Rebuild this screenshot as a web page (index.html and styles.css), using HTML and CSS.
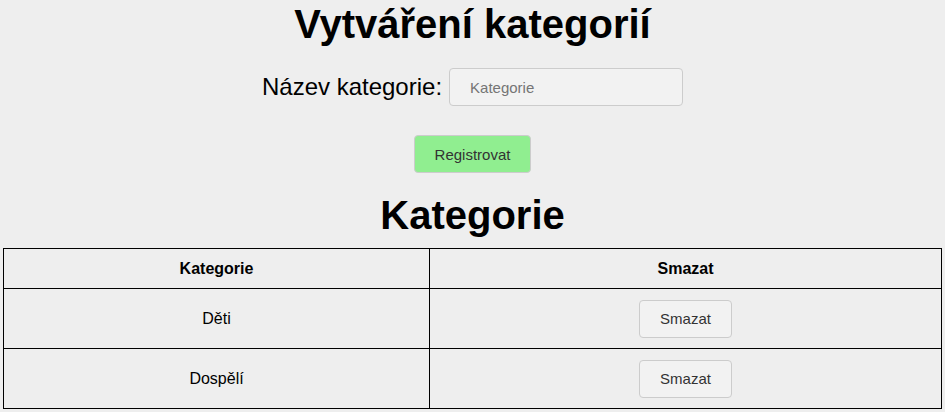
FILE: index.html
```html
<!DOCTYPE html>
<html lang="cs">
<head>
<meta charset="utf-8">
<title>Vytváření kategorií</title>
<link rel="stylesheet" href="styles.css">
</head>
<body>
<div class="page">
  <h1 class="title">Vytváření kategorií</h1>
  <form class="form">
    <div class="form-row">
      <label class="label" for="kat">Název kategorie:</label>
      <input class="input" id="kat" type="text" placeholder="Kategorie">
    </div>
    <button class="btn btn-green" type="button">Registrovat</button>
  </form>
  <h2 class="title title-sub">Kategorie</h2>
  <table class="table">
    <thead>
      <tr>
        <th class="col-name">Kategorie</th>
        <th>Smazat</th>
      </tr>
    </thead>
    <tbody>
      <tr>
        <td>Děti</td>
        <td><button class="btn" type="button">Smazat</button></td>
      </tr>
      <tr>
        <td>Dospělí</td>
        <td><button class="btn" type="button">Smazat</button></td>
      </tr>
    </tbody>
  </table>
</div>
</body>
</html>
```
FILE: styles.css
```css
html, body {
  margin: 0;
  padding: 0;
  background: #eeeeee;
  font-family: "Liberation Sans", Arial, sans-serif;
  color: #000;
}

.page {
  display: flex;
  flex-direction: column;
  align-items: center;
}

.title {
  margin: 2px 0 0;
  font-size: 40px;
  font-weight: bold;
  line-height: normal;
}

.title-sub {
  margin: 20px 0 0;
}

.form {
  display: flex;
  flex-direction: column;
  align-items: center;
  margin-top: 21px;
}

.form-row {
  display: flex;
  align-items: center;
  gap: 7px;
}

.label {
  font-size: 24px;
}

.input {
  box-sizing: border-box;
  width: 234px;
  height: 38px;
  padding: 0 20px;
  font-family: "Liberation Sans", Arial, sans-serif;
  font-size: 15px;
  background: #f2f2f2;
  border: 1px solid #cccccc;
  border-radius: 4px;
  color: #333;
  outline: none;
}

.input::placeholder {
  color: #757575;
}

.btn {
  box-sizing: border-box;
  height: 38px;
  padding: 0 20px;
  font-family: "Liberation Sans", Arial, sans-serif;
  font-size: 15px;
  color: #333333;
  background: #f2f2f2;
  border: 1px solid #cccccc;
  border-radius: 4px;
  cursor: pointer;
}

.btn-green {
  margin-top: 29px;
  background: #90ee90;
}

.table {
  width: calc(100% - 6px);
  margin: 10px 3px 0;
  border-collapse: collapse;
  font-size: 16px;
}

.table th,
.table td {
  border: 1px solid #000;
  text-align: center;
  padding: 0;
}

.table th {
  height: 39px;
  font-weight: bold;
}

.table td {
  height: 59px;
}

.col-name {
  width: 425px;
}
```
